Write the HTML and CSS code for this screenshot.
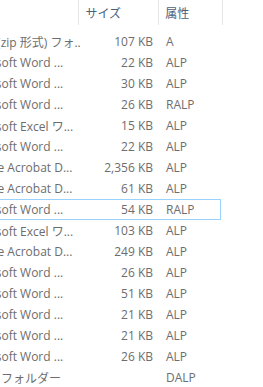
FILE: index.html
```html
<!DOCTYPE html>
<html lang="ja">
<head>
    <meta charset="UTF-8">
    <title>詳細表示</title>
    <link rel="stylesheet" href="styles.css">
</head>
<body>
    <div class="view">
        <div class="grid">
            <div class="header">
                <div class="col name"><span class="head-label">名前</span></div>
                <div class="col size"><span class="head-label">サイズ</span></div>
                <div class="col attr"><span class="head-label">属性</span></div>
            </div>

            <div class="rows">
                <div class="row"><div class="cell name zip">圧縮 (zip 形式) フォ...</div><div class="cell size">107 KB</div><div class="cell attr">A</div></div>
                <div class="row"><div class="cell name">Microsoft Word ...</div><div class="cell size">22 KB</div><div class="cell attr">ALP</div></div>
                <div class="row"><div class="cell name">Microsoft Word ...</div><div class="cell size">30 KB</div><div class="cell attr">ALP</div></div>
                <div class="row"><div class="cell name">Microsoft Word ...</div><div class="cell size">26 KB</div><div class="cell attr">RALP</div></div>
                <div class="row"><div class="cell name">Microsoft Excel ワ...</div><div class="cell size">15 KB</div><div class="cell attr">ALP</div></div>
                <div class="row"><div class="cell name">Microsoft Word ...</div><div class="cell size">22 KB</div><div class="cell attr">ALP</div></div>
                <div class="row"><div class="cell name pdf">Adobe Acrobat D...</div><div class="cell size">2,356 KB</div><div class="cell attr">ALP</div></div>
                <div class="row"><div class="cell name pdf">Adobe Acrobat D...</div><div class="cell size">61 KB</div><div class="cell attr">ALP</div></div>
                <div class="row focused"><div class="cell name">Microsoft Word ...</div><div class="cell size">54 KB</div><div class="cell attr">RALP</div></div>
                <div class="row"><div class="cell name">Microsoft Excel ワ...</div><div class="cell size">103 KB</div><div class="cell attr">ALP</div></div>
                <div class="row"><div class="cell name pdf">Adobe Acrobat D...</div><div class="cell size">249 KB</div><div class="cell attr">ALP</div></div>
                <div class="row"><div class="cell name">Microsoft Word ...</div><div class="cell size">26 KB</div><div class="cell attr">ALP</div></div>
                <div class="row"><div class="cell name">Microsoft Word ...</div><div class="cell size">51 KB</div><div class="cell attr">ALP</div></div>
                <div class="row"><div class="cell name">Microsoft Word ...</div><div class="cell size">21 KB</div><div class="cell attr">ALP</div></div>
                <div class="row"><div class="cell name">Microsoft Word ...</div><div class="cell size">21 KB</div><div class="cell attr">ALP</div></div>
                <div class="row"><div class="cell name">Microsoft Word ...</div><div class="cell size">26 KB</div><div class="cell attr">ALP</div></div>
                <div class="row"><div class="cell name folder">ファイル フォルダー</div><div class="cell size"></div><div class="cell attr">DALP</div></div>
            </div>
        </div>
    </div>
</body>
</html>
```

FILE: styles.css
```css
body {
    margin: 0;
    background-color: #fff;
    font-family: "Open Sans", "Noto Sans CJK JP", sans-serif;
    font-size: 12px;
    color: #6d6d6d;
}
.view {
    width: 263px;
    height: 387px;
    overflow: hidden;
}
.grid {
    margin-left: -110px;
    width: 333px;
}
.header {
    display: flex;
    height: 25px;
}
.col {
    box-sizing: border-box;
    height: 25px;
    border-right: 1px solid #e5e5e5;
    display: flex;
    align-items: center;
    padding-left: 6px;
    color: #4c607a;
    white-space: nowrap;
}
.col.name {
    width: 190px;
}
.col.size {
    width: 80px;
}
.col.attr {
    width: 64px;
}
.rows {
    padding-top: 6px;
}
.row {
    display: flex;
    box-sizing: border-box;
    height: 21px;
    width: 331px;
    align-items: center;
    border: 1px solid transparent;
}
.row.focused {
    border-color: #99d1ff;
}
.cell {
    white-space: nowrap;
    overflow: hidden;
}
.cell.name {
    width: 189px;
    padding-left: 73px;
    box-sizing: border-box;
}
.cell.zip {
    text-indent: 6px;
}
.cell.pdf {
    text-indent: 4px;
}
.cell.folder {
    text-indent: -14px;
}
.cell.size {
    width: 80px;
    box-sizing: border-box;
    padding-right: 7px;
    text-align: right;
}
.cell.attr {
    padding-left: 6px;
}
```
